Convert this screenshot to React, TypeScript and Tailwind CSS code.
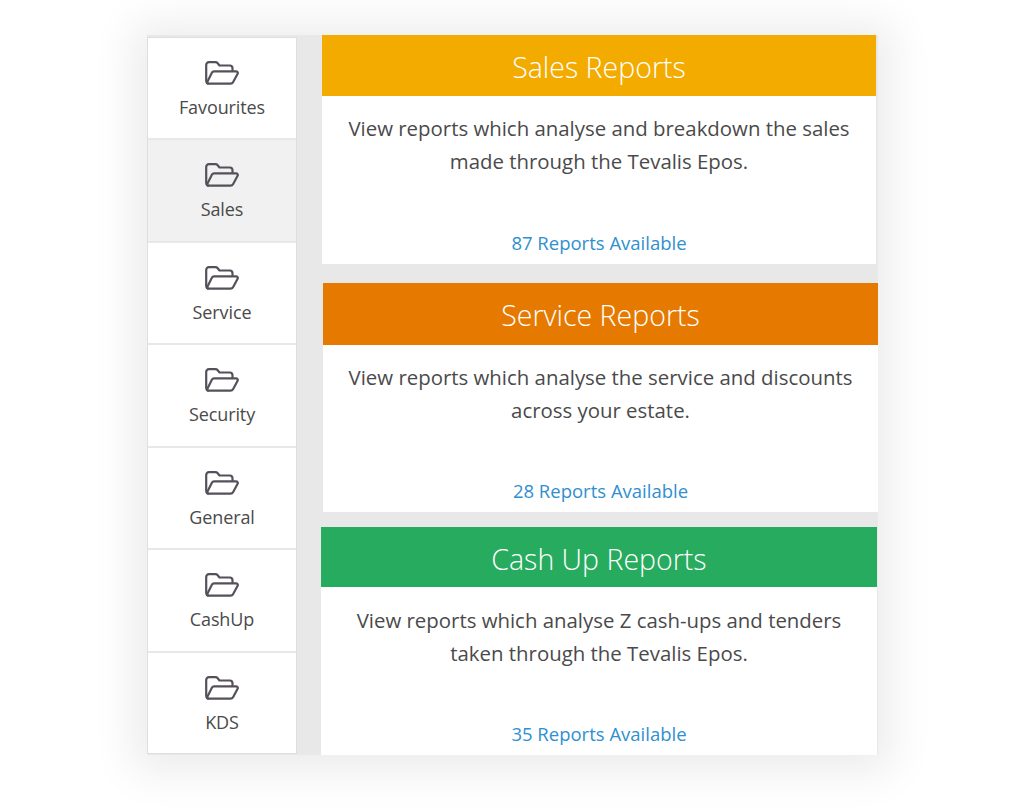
const navItems = ['Favourites', 'Sales', 'Service', 'Security', 'General', 'CashUp', 'KDS'];

const reports = [
  {
    title: 'Sales Reports',
    lines: ['View reports which analyse and breakdown the sales', 'made through the Tevalis Epos.'],
    count: '87 Reports Available',
    header: 'bg-[#f3ab00] h-[61px] pt-[3px]',
    body: 'pt-[16px]',
    box: 'ml-[1px] mt-0 w-[554px] h-[229px]',
  },
  {
    title: 'Service Reports',
    lines: ['View reports which analyse the service and discounts', 'across your estate.'],
    count: '28 Reports Available',
    header: 'bg-[#e67a00] h-[62px] pt-[3px]',
    body: 'pt-[16px]',
    box: 'ml-[2px] mt-[19px] w-[555px] h-[229px]',
  },
  {
    title: 'Cash Up Reports',
    lines: ['View reports which analyse Z cash-ups and tenders', 'taken through the Tevalis Epos.'],
    count: '35 Reports Available',
    header: 'bg-[#27ab5e] h-[60px] pt-[5px]',
    body: 'pt-[17px]',
    box: 'ml-0 mt-[15px] w-[556px] h-[228px]',
  },
];

function FolderIcon() {
  return (
    <svg viewBox="0 0 34 25" className="h-[25px] w-[34px]" fill="none" stroke="#55505a" strokeWidth="2.2" strokeLinejoin="round" strokeLinecap="round">
      <path d="M3 22.5C1.8 22 1.2 21 1.2 20V4C1.2 2.4 2.3 1.2 4 1.2h6.5c1 0 1.6.4 2.2 1.1l1.8 2.2h10.3c1.6 0 2.7 1.1 2.7 2.7v2.6" />
      <path d="M2 21.5 7 11.6c.4-.8 1-1.2 2-1.2h22c1.4 0 2.2 1.2 1.6 2.3l-4.4 8.2c-.6 1.1-1.4 1.7-2.7 1.7H4.2c-1.4 0-2.6-.2-2.2-1.1Z" />
    </svg>
  );
}

export default function App() {
  return (
    <div className="h-[811px] w-[1024px] overflow-hidden bg-white pl-[147px] pt-[35px] font-['Open_Sans',sans-serif] text-[#4a4a4a]">
      <div className="flex h-[720px] w-[731px] bg-[#e8e8e8] shadow-[0_3px_40px_14px_rgba(0,0,0,0.08)]">
        {/* Sidebar */}
        <div className="mt-[2px] flex h-[717px] w-[150px] shrink-0 flex-col border border-[#dedede] bg-white">
          {navItems.map((item) => (
            <div
              key={item}
              className={`flex flex-1 flex-col items-center border-b-2 border-[#e8e8e8] pt-[23px] last:border-b-0 ${
                item === 'Sales' ? 'bg-[#f1f1f1]' : 'bg-white'
              }`}
            >
              <FolderIcon />
              <div className="mt-[9px] text-[18px] leading-6 tracking-[-0.1px]">{item}</div>
            </div>
          ))}
        </div>

        {/* Report cards */}
        <div className="ml-[24px] flex flex-col">
          {reports.map((report) => (
            <div key={report.title} className={`flex flex-col bg-white ${report.box}`}>
              <div className={`flex shrink-0 items-center justify-center text-[28.5px] font-light text-white ${report.header}`}>
                {report.title}
              </div>
              <div className={`flex flex-1 flex-col items-center text-center text-[20.4px] leading-[32.5px] ${report.body}`}>
                {report.lines.map((line) => (
                  <div key={line}>{line}</div>
                ))}
                <div className="mt-auto mb-[9px] text-[18.5px] leading-6 text-[#2f8fcf]">{report.count}</div>
              </div>
            </div>
          ))}
        </div>
      </div>
    </div>
  );
}
